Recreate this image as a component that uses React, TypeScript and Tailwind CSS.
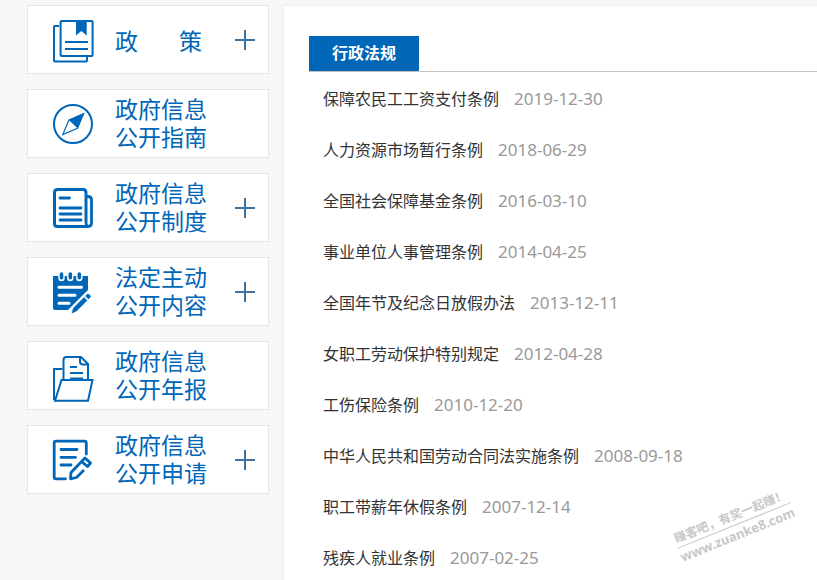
import React from "react";

const font =
  "font-['Noto_Sans','Noto_Sans_CJK_SC',sans-serif]";

function PolicyIcon() {
  return (
    <>
      <path d="M6 6H2Q1 6 1 7V40.6Q1 41.6 2 41.6H33Q34 41.6 34 40.6V37" />
      <rect x="7.6" y="1" width="32" height="35" rx="1" />
      <path d="M23 0H33.7V15.5L28.3 11L23 15.5Z" fill="currentColor" stroke="none" />
      <path d="M12 22H35M12 29H35" />
    </>
  );
}

function CompassIcon() {
  return (
    <>
      <circle cx="20" cy="20" r="19" />
      <path d="M15.5 15.7L31.4 8.8L24.8 24.6Z" fill="currentColor" stroke="none" />
      <path d="M30.5 9.8L15.8 16.2L9.8 30.6L24.4 24.2Z" strokeWidth="1.2" />
    </>
  );
}

function SystemIcon() {
  return (
    <>
      <path d="M36 38.5H4.5Q1.5 38.5 1.5 35.5V4.5Q1.5 1.5 4.5 1.5H30Q33 1.5 33 4.5V33" strokeWidth="3" />
      <path d="M33 8.5H35Q38.5 8.5 38.5 12V35Q38.5 38.5 35 38.5Q33 38 33 33" strokeWidth="2.8" />
      <path d="M7 10H16.5M7 20H28M7 26H28M7 32H28" strokeWidth="2.8" strokeLinecap="round" />
    </>
  );
}

function NotepadIcon() {
  return (
    <>
      <path d="M0 4H35V18L15 38H2Q0 38 0 36Z" fill="currentColor" stroke="none" />
      <path d="M8.5 2V6M17.3 2V6M26.3 2V6" stroke="white" strokeWidth="6.4" strokeLinecap="round" />
      <path d="M8.5 2V5.8M17.3 2V5.8M26.3 2V5.8" strokeWidth="3.6" strokeLinecap="round" />
      <path d="M6 15.3H28.5M6 23.3H22M6 31.3H16" stroke="white" strokeWidth="3" strokeLinecap="round" />
      <path d="M19 40L36 23" stroke="white" strokeWidth="8" />
      <path d="M19 41L20.5 36L31 25.5L34 28.5L23.5 39ZM32.5 24L34 22.5Q35 21.5 36 22.5L37 23.5Q38 24.5 37 25.5L35.5 27Z" fill="currentColor" stroke="currentColor" strokeWidth="0.6" />
    </>
  );
}

function ReportIcon() {
  return (
    <>
      <path d="M9.5 13H1V44" />
      <path d="M10.5 24V4Q10.5 1 13.5 1H28L35 8V23M27 1V5.5Q27 8.5 30 8.5H35" />
      <path d="M17 11H24M17 17H30M17 22.5H30" />
      <path d="M8.5 24H39.5L35 44.8H2Z" />
    </>
  );
}

function ApplyIcon() {
  return (
    <>
      <path d="M12.5 38.8H3Q1.2 38.8 1.2 37V3Q1.2 1.2 3 1.2H31.5Q33.3 1.2 33.3 3V14" strokeWidth="2.8" strokeLinecap="round" />
      <path d="M8 9.5H24M8 17.3H22.5M8 25H18" strokeWidth="2.8" strokeLinecap="round" />
      <path d="M31 30L23.5 37.5L17.5 38.8L18 32.5L32 18L37.5 23L34.5 26.5L28.5 21.5" strokeWidth="2.8" strokeLinejoin="round" />
    </>
  );
}

type Item = {
  lines: string[];
  icon: () => React.ReactElement;
  expandable: boolean;
};

const items: Item[] = [
  { lines: ["政", "策"], icon: PolicyIcon, expandable: true },
  { lines: ["政府信息", "公开指南"], icon: CompassIcon, expandable: false },
  { lines: ["政府信息", "公开制度"], icon: SystemIcon, expandable: true },
  { lines: ["法定主动", "公开内容"], icon: NotepadIcon, expandable: true },
  { lines: ["政府信息", "公开年报"], icon: ReportIcon, expandable: false },
  { lines: ["政府信息", "公开申请"], icon: ApplyIcon, expandable: true },
];

const regulations = [
  ["保障农民工工资支付条例", "2019-12-30"],
  ["人力资源市场暂行条例", "2018-06-29"],
  ["全国社会保障基金条例", "2016-03-10"],
  ["事业单位人事管理条例", "2014-04-25"],
  ["全国年节及纪念日放假办法", "2013-12-11"],
  ["女职工劳动保护特别规定", "2012-04-28"],
  ["工伤保险条例", "2010-12-20"],
  ["中华人民共和国劳动合同法实施条例", "2008-09-18"],
  ["职工带薪年休假条例", "2007-12-14"],
  ["残疾人就业条例", "2007-02-25"],
];

function SideCard({ item }: { item: Item }) {
  const Icon = item.icon;
  const single = item.lines[0].length === 1;
  return (
    <li className="flex h-[69px] items-center border border-[#e6e6e6] bg-white pl-[25px] pr-3">
      <a href="#" className="flex flex-1 items-center gap-5 text-[#0066b8]">
        <svg className="shrink-0 overflow-visible" viewBox="0 0 42 39" width="42" height="39" fill="none" stroke="currentColor" strokeWidth="2" aria-hidden="true">
          <Icon />
        </svg>
        <span className={single ? "flex gap-[41px] pt-0.5 text-[23px] leading-7" : "flex flex-col pb-0.5 text-[23px] leading-7"}>
          {item.lines.map((line) => (
            <span key={line}>{line}</span>
          ))}
        </span>
      </a>
      {item.expandable && (
        <button type="button" aria-label="展开" className="text-[#3f739d]">
          <svg width="22" height="22" viewBox="0 0 22 22" fill="none" stroke="currentColor" strokeWidth="2" aria-hidden="true">
            <path d="M1 11H21M11 1V21" />
          </svg>
        </button>
      )}
    </li>
  );
}

export default function App() {
  return (
    <div className={`flex h-screen items-stretch gap-3.5 overflow-hidden bg-[#f7f7f7] pl-[27px] pt-[5px] ${font}`}>
      <nav className="w-[242px] shrink-0">
        <ul className="flex flex-col gap-[15px]">
          {items.map((item) => (
            <SideCard key={item.lines.join("")} item={item} />
          ))}
        </ul>
      </nav>
      <main className="relative min-w-0 flex-1 border-l border-t border-[#efefef] bg-white pl-[25px] pt-[30px]">
        <div className="flex border-b border-[#c4c4c4]">
          <h2 className="bg-[#0066b8] px-[23px] text-base font-bold leading-[35px] text-white">行政法规</h2>
        </div>
        <ul className="pl-3.5 pt-px">
          {regulations.map(([title, date]) => (
            <li key={title} className="flex h-[51px] items-center gap-[15px] whitespace-nowrap">
              <a href="#" className="text-base text-[#333]">{title}</a>
              <time dateTime={date} className="text-[17px] text-[#999]">{date}</time>
            </li>
          ))}
        </ul>
        <div className="absolute bottom-9 right-[22px] -rotate-[22deg] whitespace-nowrap text-center font-bold text-[#c8c8c8]">
          <p className="border-b border-[#c8c8c8] text-xs leading-[18px]">赚客吧，有奖一起赚！</p>
          <p className="text-[13px] leading-[18px]">www.zuanke8.com</p>
        </div>
      </main>
    </div>
  );
}
